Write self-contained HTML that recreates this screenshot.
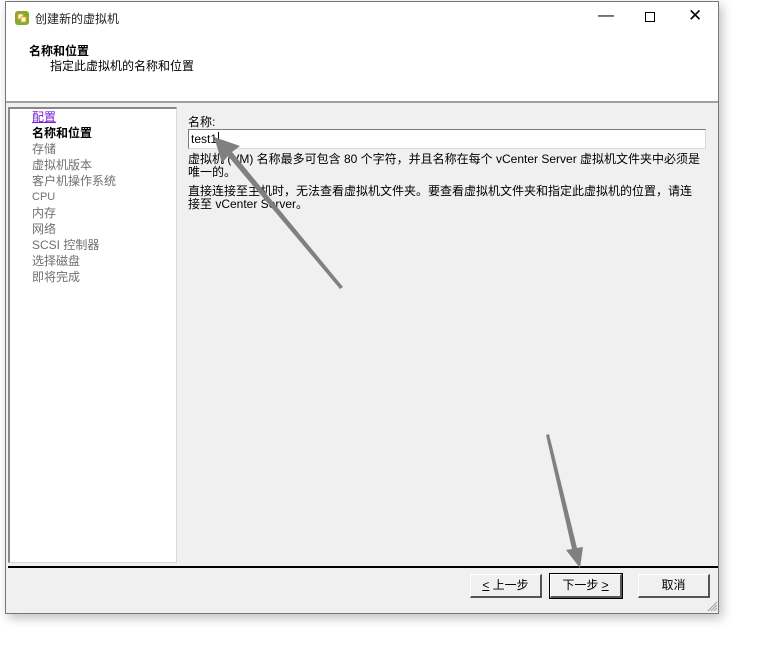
<!DOCTYPE html>
<html><head><meta charset="utf-8"><style>
*{margin:0;padding:0;box-sizing:border-box}
body{width:772px;height:654px;background:#fff;font-family:"Liberation Sans","Noto Sans CJK SC",sans-serif;font-size:12px;position:relative;overflow:hidden}
.win{position:absolute;left:5px;top:1px;width:714px;height:613px;border:1px solid #777;background:#f0f0f0;box-shadow:3px 4px 10px rgba(0,0,0,.25)}
.hdr{position:absolute;left:0;top:0;width:712px;height:101px;background:#fff;border-bottom:2px solid #a0a0a0}
.t{position:absolute;white-space:nowrap}
.left{position:absolute;left:2px;top:105px;width:169px;height:456px;background:#fff;border:1px solid #d8d8d8;border-left:2px solid #888;border-top:2px solid #888}
.left div{position:absolute;left:22px;white-space:nowrap;color:#707070;font-size:12px;line-height:16px}
.sep{position:absolute;left:2px;top:564px;width:710px;height:2px;background:#000}
.btn{position:absolute;top:572px;width:72px;height:24px;background:#f0f0f0;border:1px solid #fff;border-right:2px solid #555;border-bottom:2px solid #555;text-align:center;line-height:20px;font-size:12px}
</style></head><body>
<div class="win">
<div class="hdr">
<svg style="position:absolute;left:8px;top:8px" width="16" height="16" viewBox="0 0 16 16"><rect x="1" y="1" width="14" height="14" rx="3" fill="#7fae2c"/><rect x="4" y="4" width="5" height="5" fill="#fff" stroke="#e8a020"/><rect x="7" y="7" width="5" height="5" fill="#fff" stroke="#e8a020"/></svg>
<div class="t" style="left:29px;top:8px;color:#222">创建新的虚拟机</div>
<div class="t" style="left:592px;top:5px;font-size:16px">—</div>
<div style="position:absolute;left:639px;top:10px;width:10px;height:10px;border:1px solid #000"></div>
<div class="t" style="left:682px;top:4px;font-size:17px">✕</div>
<div class="t" style="left:23px;top:40px;font-weight:bold;font-size:12px">名称和位置</div>
<div class="t" style="left:44px;top:55px">指定此虚拟机的名称和位置</div>
</div>
<div class="left">
<div style="top:0px;color:#7a1fd6;text-decoration:underline">配置</div>
<div style="top:16px;color:#000;font-weight:bold">名称和位置</div>
<div style="top:32px">存储</div>
<div style="top:48px">虚拟机版本</div>
<div style="top:64px">客户机操作系统</div>
<div style="top:80px;font-size:11px">CPU</div>
<div style="top:96px">内存</div>
<div style="top:112px">网络</div>
<div style="top:128px">SCSI 控制器</div>
<div style="top:144px">选择磁盘</div>
<div style="top:160px">即将完成</div>
</div>
<div class="t" style="left:182px;top:111px">名称:</div>
<div style="position:absolute;left:182px;top:127px;width:518px;height:20px;background:#fff;border:1px solid #7a7a7a;border-color:#7a7a7a #d8d8d8 #d8d8d8 #7a7a7a;padding:2px 2px;font-size:12px;line-height:14px">test1<span style="border-left:1px solid #000;margin-left:1px"></span></div>
<div class="t" style="left:182px;top:151px;line-height:13px">虚拟机 (VM) 名称最多可包含 80 个字符，并且名称在每个 vCenter Server 虚拟机文件夹中必须是<br>唯一的。</div>
<div class="t" style="left:182px;top:183px;line-height:13px">直接连接至主机时，无法查看虚拟机文件夹。要查看虚拟机文件夹和指定此虚拟机的位置，请连<br>接至 vCenter Server。</div>
<div class="sep"></div>
<div class="btn" style="left:464px"><u>&lt;</u> 上一步</div>
<div class="btn" style="left:544px;outline:1px solid #000">下一步 <u>&gt;</u></div>
<div class="btn" style="left:632px">取消</div>
</div>
<svg style="position:absolute;left:0;top:0" width="772" height="654">
<polygon points="214,137 240,146 232,152 343,287 340,289 228,156 222,163" fill="#808080"/>
<polygon points="580,568 566,550 572,549 546,435 549,434 577,548 583,547" fill="#808080"/>
<g stroke="#999"><line x1="708" y1="611" x2="717" y2="602"/><line x1="711" y1="611" x2="717" y2="605"/><line x1="714" y1="611" x2="717" y2="608"/></g>
</svg>
</body></html>
